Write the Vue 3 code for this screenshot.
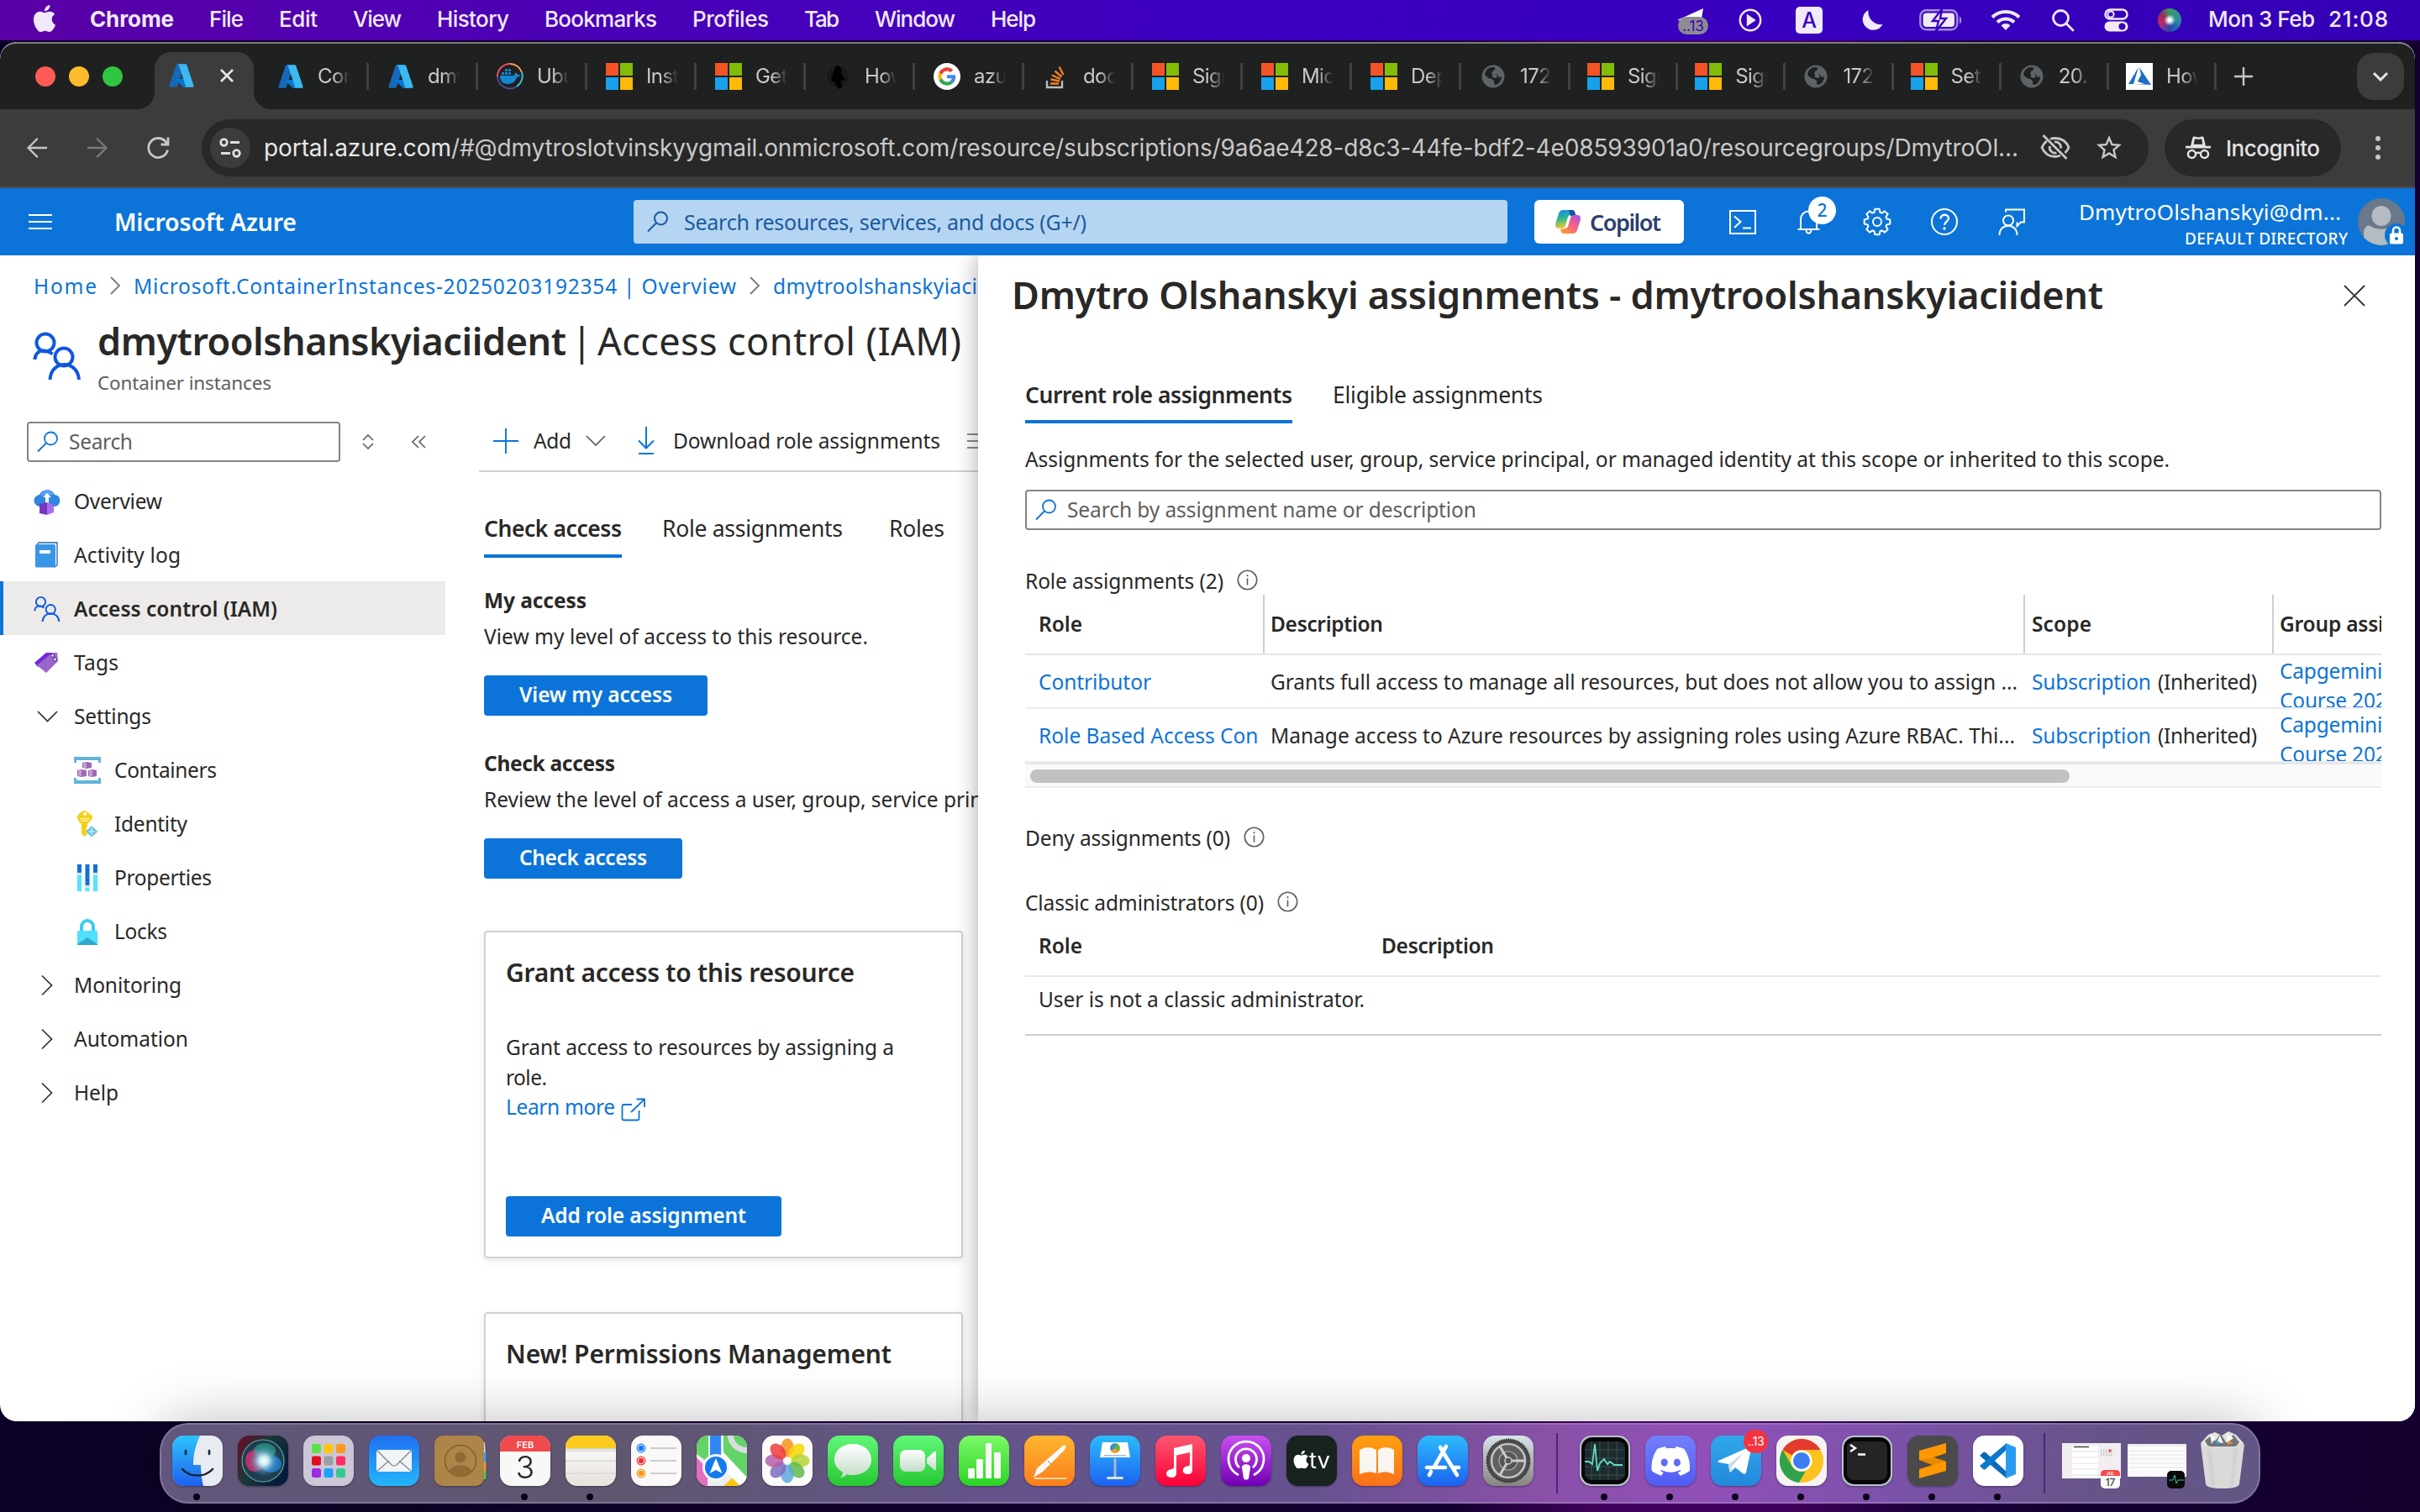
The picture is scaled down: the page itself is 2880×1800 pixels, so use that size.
<script setup>
// Spreads a label's letters so that it takes exactly the given width.
const vFit = {
  mounted(el, binding) {
    const range = document.createRange()
    range.selectNodeContents(el)
    const natural = range.getBoundingClientRect().width
    const gaps = Math.max(1, el.textContent.length - 1)
    el.style.letterSpacing = ((binding.value - natural) / gaps).toFixed(3) + 'px'
    el.style.width = binding.value + 'px'
  }
}

const menus = [['File', 41], ['Edit', 46], ['View', 58], ['History', 86], ['Bookmarks', 134], ['Profiles', 91], ['Tab', 42], ['Window', 96], ['Help', 54]]

const tabs = [
  ['azure', 'Cont'], ['azure', 'dmy'], ['docker', 'Ubu'], ['ms', 'Inst'], ['ms', 'Get'], ['dark', 'How'], ['google', 'azu'],
  ['stack', 'doc'], ['ms', 'Sign'], ['ms', 'Micr'], ['ms', 'Dep'], ['globe', '172.'], ['ms', 'Sign'], ['ms', 'Sign'],
  ['globe', '172.'], ['ms', 'Set'], ['globe', '20.'], ['docs', 'How']
].map(([icon, text], i) => ({ icon, text, narrow: i > 11 }))

const nav = [
  { icon: 'overview', text: 'Overview', w: 105 },
  { icon: 'log', text: 'Activity log', w: 127 },
  { icon: 'iam', text: 'Access control (IAM)', w: 242, active: true },
  { icon: 'tags', text: 'Tags', w: 53 },
  { icon: 'down', text: 'Settings', w: 92 },
  { icon: 'containers', text: 'Containers', w: 122, sub: true },
  { icon: 'identity', text: 'Identity', w: 87, sub: true },
  { icon: 'properties', text: 'Properties', w: 116, sub: true },
  { icon: 'locks', text: 'Locks', w: 63, sub: true },
  { icon: 'right', text: 'Monitoring', w: 128 },
  { icon: 'right', text: 'Automation', w: 136 },
  { icon: 'right', text: 'Help', w: 53 }
]

const roles = [
  { role: 'Contributor', rw: 134, desc: 'Grants full access to manage all resources, but does not allow you to assign ...', dw: 889 },
  { role: 'Role Based Access Control', rw: 0, desc: 'Manage access to Azure resources by assigning roles using Azure RBAC. Thi...', dw: 886 }
]

function gearPath(c, outer, inner, teeth) {
  const pts = []
  for (let i = 0; i < teeth; i++) {
    const a = (i * 2 * Math.PI) / teeth
    for (const [d, r] of [[-0.3, inner], [-0.17, outer], [0.17, outer], [0.3, inner]]) {
      pts.push((c + r * Math.sin(a + d)).toFixed(2) + ' ' + (c - r * Math.cos(a + d)).toFixed(2))
    }
  }
  return 'M' + pts.join('L') + 'Z'
}
const gear = gearPath(17, 15.5, 11.8, 8)

const petals = ['#f7931e', '#f6d800', '#b5d334', '#5fba46', '#5fa7dd', '#7d6cc0', '#b45fa8', '#ee3b3b']
const pads = ['#5de04a', '#ffc60a', '#f79a1d', '#e01020', '#9a9fa3', '#ff2d62', '#a02be0', '#1ea0ff', '#35c98d']
</script>

<template>
  <div class="screen">
    <svg width="0" height="0" class="defs"><defs>
      <symbol id="apple" viewBox="0 0 24 24"><path d="M12.152 6.896c-.948 0-2.415-1.078-3.96-1.04-2.04.027-3.91 1.183-4.961 3.014-2.117 3.675-.546 9.103 1.519 12.09 1.013 1.454 2.208 3.09 3.792 3.039 1.52-.065 2.09-.987 3.935-.987 1.831 0 2.35.987 3.96.948 1.637-.026 2.676-1.48 3.676-2.948 1.156-1.688 1.636-3.325 1.662-3.415-.039-.013-3.182-1.221-3.22-4.857-.026-3.04 2.48-4.494 2.597-4.559-1.429-2.09-3.623-2.324-4.39-2.376-2-.156-3.675 1.09-4.61 1.09zM15.53 3.83c.843-1.012 1.4-2.427 1.245-3.83-1.207.052-2.662.805-3.532 1.818-.78.896-1.454 2.338-1.273 3.714 1.338.104 2.715-.688 3.559-1.701" /></symbol>
      <symbol id="azure" viewBox="0 0 96 96"><path fill="#1668b8" d="M33.338 6.544h26.038l-27.03 80.087a4.152 4.152 0 0 1-3.933 2.824H8.149a4.145 4.145 0 0 1-3.928-5.47L29.404 9.368a4.152 4.152 0 0 1 3.934-2.825z" /><path fill="#0078d4" d="M71.175 60.261h-41.29a1.911 1.911 0 0 0-1.305 3.309l26.532 24.764a4.171 4.171 0 0 0 2.846 1.121h23.38z" /><path fill="#3cb8f0" d="M66.595 9.364a4.145 4.145 0 0 0-3.928-2.82H33.648a4.146 4.146 0 0 1 3.928 2.82l25.184 74.62a4.146 4.146 0 0 1-3.928 5.472h29.02a4.146 4.146 0 0 0 3.927-5.472z" /></symbol>
      <symbol id="info" viewBox="0 0 25 25"><g fill="none" stroke="#605e5c" stroke-width="1.6"><circle cx="12.5" cy="12.5" r="11.2" /><path d="M12.5 10.5v8M12.5 6v2.2" /></g></symbol>
    </defs></svg>

    <header class="menubar">
      <svg class="apple" width="32" height="32" fill="#f1e9fa"><use href="#apple" /></svg>
      <nav class="menus">
        <b v-fit="100">Chrome</b>
        <span v-for="m in menus" :key="m[0]" v-fit="m[1]">{{ m[0] }}</span>
      </nav>
      <div class="status">
        <svg width="38" height="34" viewBox="0 0 38 34"><path fill="#fff" d="M0 15 31 1 27 24 14 16z" /><rect x="1" y="11" width="36" height="21" rx="10.5" fill="#8c8c90" /><text x="19" y="28" text-anchor="middle" font-size="17" fill="#3a00b8" font-family="Inter, sans-serif">..13</text></svg>
        <svg width="28" height="28" viewBox="0 0 28 28" fill="none" stroke="#f0eafb" stroke-width="2.4"><circle cx="14" cy="14" r="12.2" /><path d="M11 8.8v10.4l7.6-5.2z" fill="#f0eafb" /></svg>
        <div class="abox">A</div>
        <svg width="28" height="28" viewBox="0 0 28 28"><path fill="#f0eafb" d="M9.5 2a12.600 12.600 0 1 0 17 17A15 15 0 0 1 9.500 2z" /></svg>
        <svg width="52" height="26" viewBox="0 0 52 26"><rect x="1.3" y="1.3" width="44" height="23" rx="7" fill="none" stroke="#a58ce0" stroke-width="2.4" /><rect x="4.6" y="4.6" width="37.4" height="16.4" rx="4" fill="#f0eafb" /><path d="M48 8.5c3 1 3 8 0 9z" fill="#a58ce0" /><path d="M27 0 16 14h7l-3 12 12-15h-7z" fill="#f0eafb" stroke="#3800be" stroke-width="2.4" /></svg>
        <svg width="36" height="26" viewBox="0 0 36 26" fill="none" stroke="#f0eafb" stroke-width="4"><path d="M2 9.5a23 23 0 0 1 32 0M8 15.5a14.5 14.5 0 0 1 20 0" /><path d="M18 25l-5.500-5.700a8 8 0 0 1 11 0z" fill="#f0eafb" stroke="none" /></svg>
        <svg width="28" height="28" viewBox="0 0 28 28" fill="none" stroke="#f0eafb" stroke-width="2.8"><circle cx="11.5" cy="11.5" r="9" /><path d="M18 18l8 8" stroke-linecap="round" /></svg>
        <svg width="30" height="28" viewBox="0 0 30 28"><rect x="1.5" y="1.5" width="26" height="11" rx="5.5" fill="none" stroke="#f0eafb" stroke-width="2.4" /><circle cx="8" cy="7" r="3.6" fill="none" stroke="#f0eafb" stroke-width="2" /><rect x="0.5" y="15.5" width="28" height="12" rx="6" fill="#f0eafb" /><circle cx="21.5" cy="21.5" r="4" fill="#3800be" /></svg>
        <div class="siri-mini"></div>
      </div>
      <div class="clock"><span v-fit="127">Mon 3 Feb</span><span v-fit="71">21:08</span></div>
    </header>

    <section class="window">
      <div class="tabstrip">
        <div class="lights"><i class="red"></i><i class="yellow"></i><i class="green"></i></div>
        <div class="tab-active">
          <svg width="32" height="32"><use href="#azure" /></svg>
          <svg class="tclose" width="20" height="20" viewBox="0 0 20 20" stroke="#e8e8e8" stroke-width="2.6"><path d="M3 3l14 14M17 3 3 17" /></svg>
        </div>
        <div v-for="(t, i) in tabs" :key="i" class="tab" :class="{ narrow: t.narrow }">
          <svg v-if="t.icon === 'azure'" width="32" height="32"><use href="#azure" /></svg>
          <svg v-else-if="t.icon === 'ms'" width="32" height="32" viewBox="0 0 32 32"><path fill="#f35325" d="M0 0h15v15H0z" /><path fill="#81bc06" d="M17 0h15v15H17z" /><path fill="#18a0ea" d="M0 17h15v15H0z" /><path fill="#ffba08" d="M17 17h15v15H17z" /></svg>
          <svg v-else-if="t.icon === 'globe'" width="32" height="32" viewBox="0 0 32 32"><circle cx="16" cy="16" r="13.5" fill="#5f6368" /><path fill="#1f2020" d="M15 5c3 0 4 1 3 3l-3 2-1 3h6l3 4 3-1c0 5-3 9-7 10l-2-1v-4l-3-2-4-1-4-4c0-4 4-9 9-9z" /><path fill="#5f6368" d="M15 13h4l2 3-2 2-4-1z" /></svg>
          <svg v-else-if="t.icon === 'google'" width="32" height="32" viewBox="0 0 72 72"><circle cx="36" cy="36" r="36" fill="#fff" /><g transform="translate(12 12)"><path fill="#EA4335" d="M24 9.5c3.54 0 6.71 1.22 9.21 3.6l6.85-6.85C35.9 2.38 30.47 0 24 0 14.62 0 6.51 5.38 2.56 13.22l7.98 6.19C12.43 13.72 17.74 9.5 24 9.5z" /><path fill="#4285F4" d="M46.98 24.55c0-1.57-.15-3.09-.38-4.55H24v9.02h12.94c-.58 2.96-2.26 5.48-4.78 7.18l7.73 6c4.51-4.18 7.09-10.36 7.09-17.65z" /><path fill="#FBBC05" d="M10.53 28.59c-.48-1.45-.76-2.99-.76-4.59s.27-3.14.76-4.59l-7.98-6.19C.92 16.46 0 20.12 0 24c0 3.88.92 7.54 2.56 10.78l7.97-6.19z" /><path fill="#34A853" d="M24 48c6.48 0 11.93-2.13 15.89-5.81l-7.73-6c-2.15 1.45-4.92 2.3-8.16 2.3-6.26 0-11.57-4.22-13.47-9.91l-7.98 6.19C6.51 42.62 14.62 48 24 48z" /></g></svg>
          <svg v-else-if="t.icon === 'docker'" width="32" height="32" viewBox="0 0 32 32" fill="none" stroke-width="2"><path d="M16 1A15 15 0 0 0 1 16" stroke="#f0506a" /><path d="M16 1a15 15 0 0 1 14 10" stroke="#f5a04a" /><path d="M30 11a15 15 0 0 1-6 17" stroke="#38c8d8" /><path d="M24 28A15 15 0 0 1 1 16" stroke="#4a4a90" /><path fill="#1687d0" d="M4 15h17c0-3 2-4 3-3l1 2h3c-1 3-3 3-4 3-2 6-6 8-11 8-6 0-9-4-9-10zM6 11h3v3H6zM10 11h3v3h-3zM14 11h3v3h-3zM10 7h3v3h-3zM14 7h3v3h-3z" /></svg>
          <svg v-else-if="t.icon === 'dark'" width="32" height="32" viewBox="0 0 32 32"><circle cx="16" cy="16" r="14" fill="#181919" stroke="#262828" /><path fill="#000" d="M14 3c5 0 7 4 6 9l5 8-5 1 1 8-4 2-5-9-4-1 2-8z" /></svg>
          <svg v-else-if="t.icon === 'stack'" width="32" height="32" viewBox="0 0 32 32" fill="none" stroke-width="2.4"><path stroke="#bcbbbb" d="M5 21v8h18v-8" /><path stroke="#f48024" d="M9 24.500h10M9.500 19.500l10.500 2M11 14.500l10 4.500M14.500 9.500l8 7M19.500 4.500l5 9.500" /></svg>
          <svg v-else width="32" height="32" viewBox="0 0 32 32"><path fill="#fff" d="M0 0h32v32H0z" /><path fill="#1f6fc0" d="M15 5 3 25h6zM16 5l2 9-4 8 8 3H10l20 1z" /></svg>
          <span class="tab-text">{{ t.text }}</span>
        </div>
        <svg class="newtab" width="22" height="22" viewBox="0 0 22 22" stroke="#c8c8c8" stroke-width="2.4"><path d="M11 0v22M0 11h22" /></svg>
        <div class="tabsearch"><svg width="20" height="12" viewBox="0 0 20 12" fill="none" stroke="#e6e6e6" stroke-width="3"><path d="M2 2l8 8 8-8" /></svg></div>
      </div>

      <div class="toolbar">
        <svg class="nav-i" width="36" height="36" viewBox="0 0 24 24" fill="#c7c7c7"><path d="M20 11.200H6.900l6.200-6.200L12 4l-8 8 8 8 1.100-1.100-6.200-6.100H20z" /></svg>
        <svg class="nav-i" width="36" height="36" viewBox="0 0 24 24" fill="#7a7a7a"><path transform="matrix(-1 0 0 1 24 0)" d="M20 11.200H6.900l6.200-6.200L12 4l-8 8 8 8 1.100-1.100-6.200-6.100H20z" /></svg>
        <svg class="nav-i" width="36" height="36" viewBox="0 0 36 36" fill="none" stroke="#c7c7c7" stroke-width="2.8"><path d="M29.500 20.500A11.500 11.500 0 1 1 27 10.500l2.500 3M30 5.500v8.500h-8.500" /></svg>
        <div class="omnibox">
          <div class="site"><svg width="26" height="24" viewBox="0 0 26 24" fill="none" stroke="#dedede" stroke-width="2.8"><circle cx="5.5" cy="5.5" r="3.8" /><path d="M13 5.500h11M2 18.500h11" /><circle cx="20.5" cy="18.5" r="3.8" /></svg></div>
          <span v-fit="223" class="host">portal.azure.com</span>
          <span v-fit="1865" class="path">/#@dmytroslotvinskyygmail.onmicrosoft.com/resource/subscriptions/9a6ae428-d8c3-44fe-bdf2-4e08593901a0/resourcegroups/DmytroOl...</span>
          <svg class="eye" width="38" height="36" viewBox="0 0 38 36" fill="none" stroke="#c7c7c7" stroke-width="2.8"><path d="M13 7.500c2-.7 4-1 6-1 8 0 13.500 5 16 11-1 2.500-2.500 4.600-4.500 6.500M25 27a17 17 0 0 1-6 1.500c-8 0-13.500-5-16-11 1.300-3 3.200-5.500 5.800-7.600M12.500 16a6.500 6.500 0 0 0 8 8M18 11a6.500 6.500 0 0 1 7.500 7.500M4.500 3l28 28" /></svg>
          <svg width="36" height="36" viewBox="0 0 24 24" fill="#c7c7c7"><path d="M22 9.240l-7.190-.62L12 2 9.190 8.630 2 9.240l5.460 4.730L5.820 21 12 17.270 18.180 21l-1.630-7.030L22 9.240zM12 15.400l-3.760 2.270 1-4.280-3.320-2.880 4.380-.38L12 6.100l1.710 4.040 4.380.38-3.320 2.880 1 4.280L12 15.400z" /></svg>
        </div>
        <div class="incog">
          <svg width="30" height="28" viewBox="0 0 30 28"><path fill="#e3e3e3" d="M8.500 1.500c.3-1 1-1.300 2-1l4.500 1 4.500-1c1-.3 1.700 0 2 1L24 12H6z" /><path fill="#282828" d="M11 3.200l4 .9 4-.9 1.300 6.500H9.700z" /><path d="M0 11.800h30v2.800H0z" fill="#e3e3e3" /><g fill="none" stroke="#e3e3e3" stroke-width="2.500"><circle cx="7.500" cy="21.500" r="4.500" /><circle cx="22.500" cy="21.500" r="4.500" /><path d="M12 20.500c2-1 4-1 6 0" /></g></svg>
          <span v-fit="112">Incognito</span>
        </div>
        <svg class="kebab" width="8" height="30" viewBox="0 0 8 30" fill="#c7c7c7"><circle cx="4" cy="4" r="3" /><circle cx="4" cy="15" r="3" /><circle cx="4" cy="26" r="3" /></svg>
      </div>

      <div class="azbar">
        <svg class="burger" width="28" height="20" viewBox="0 0 28 20" stroke="#fff" stroke-width="2"><path d="M0 2h28M0 10h28M0 18h28" /></svg>
        <span v-fit="217" class="brand">Microsoft Azure</span>
        <div class="azsearch">
          <svg width="26" height="26" viewBox="0 0 26 26" fill="none" stroke="#1b5a9c" stroke-width="2"><circle cx="16.500" cy="9" r="7.500" /><path d="M11 14.500 1 24.500" /></svg>
          <span v-fit="479">Search resources, services, and docs (G+/)</span>
        </div>
        <div class="copilot">
          <svg width="30" height="28" viewBox="0 0 30 28"><defs><linearGradient id="cpa" x1="0" y1="0" x2="0.2" y2="1"><stop offset="0" stop-color="#1a8ae8" /><stop offset=".5" stop-color="#2cb890" /><stop offset="1" stop-color="#f4c832" /></linearGradient><linearGradient id="cpb" x1="1" y1="0" x2="0.3" y2="1"><stop offset="0" stop-color="#a050e8" /><stop offset=".5" stop-color="#f06090" /><stop offset="1" stop-color="#ff9040" /></linearGradient></defs><path fill="url(#cpa)" d="M9 0h11c2.500 0 3 2 4 5l-6 1c-2 0-3 2-3.500 4L12 19c-1 2-2 3-4 3H4c-4 0-4.500-3-3.500-7L4 4c1-2.600 2.500-4 5-4z" /><path fill="#1550a8" d="M16 0h4c2.500 0 3 2 4 5l.6 2H18z" /><path fill="url(#cpb)" d="M21 28H10c-2.500 0-3-2-4-5l6-1c2 0 3-2 3.500-4L18 9c1-2 2-3 4-3h4c4 0 4.500 3 3.500 7L26 24c-1 2.600-2.500 4-5 4z" /></svg>
          <span v-fit="85">Copilot</span>
        </div>
        <div class="azicons">
          <svg width="34" height="34" viewBox="0 0 34 34" fill="none" stroke="#fff" stroke-width="2"><path d="M2 4h30v27H2zM7 10.500l7.500 6.500L7 24M17 24.500h10" /></svg>
          <div class="bell">
            <svg width="34" height="34" viewBox="0 0 34 34" fill="none" stroke="#fff" stroke-width="2"><path d="M6 26V14a9.500 9.500 0 0 1 19 0v12M2.500 26h26M12.500 27c.5 5 5.500 5 6 0" /></svg>
            <i>2</i>
          </div>
          <svg width="34" height="34" viewBox="0 0 34 34" fill="none" stroke="#fff" stroke-width="2"><path :d="gear" stroke-linejoin="round" /><circle cx="17" cy="17" r="5" /></svg>
          <svg width="34" height="34" viewBox="0 0 34 34" fill="none" stroke="#fff" stroke-width="2"><circle cx="17" cy="17" r="15" /><path d="M12.500 13.500c0-6.500 9.500-6 9.500-.5 0 3.800-5 4-5 8" stroke-width="2.4" /><circle cx="17" cy="25" r="1.700" fill="#fff" stroke="none" /></svg>
          <svg width="34" height="34" viewBox="0 0 34 34" fill="none" stroke="#fff" stroke-width="2"><circle cx="13" cy="15.500" r="6" /><path d="M2.500 33c0-15 21-15 21 0M10 5.500V2.500h22v15h-4l-4.500 4.500v-4.500" /></svg>
        </div>
        <div class="who"><span v-fit="312" class="mail">DmytroOlshanskyi@dm...</span><span v-fit="194" class="dir">DEFAULT DIRECTORY</span></div>
        <div class="avatar">
          <svg width="56" height="56" viewBox="0 0 56 56"><defs><clipPath id="av"><circle cx="28" cy="28" r="28" /></clipPath></defs><g clip-path="url(#av)"><path fill="#69788a" d="M0 0h56v56H0z" /><ellipse cx="28" cy="21" rx="11.500" ry="12" fill="#b4bbc1" /><path fill="#b4bbc1" d="M7 56V42c0-8 5-11 8-9 7 5 19 5 26 0 4-2 8 1 8 9v14z" /></g></svg>
          <svg class="lock" width="28" height="28" viewBox="0 0 28 28"><circle cx="14" cy="14" r="14" fill="#0c74d8" /><rect x="6" y="11.500" width="16" height="13" rx="2" fill="#fff" /><path d="M10 12V8.500a4 4 0 0 1 8 0V12" fill="none" stroke="#fff" stroke-width="2.600" /><circle cx="14" cy="18" r="2" fill="#0c74d8" /></svg>
        </div>
      </div>

      <div class="body">
        <div class="page">
          <div class="crumbs">
            <span v-fit="75">Home</span>
            <svg width="12" height="22" viewBox="0 0 12 22" fill="none" stroke="#797775" stroke-width="1.8"><path d="M1 1l10 10L1 21" /></svg>
            <span v-fit="717">Microsoft.ContainerInstances-20250203192354 | Overview</span>
            <svg width="12" height="22" viewBox="0 0 12 22" fill="none" stroke="#797775" stroke-width="1.8"><path d="M1 1l10 10L1 21" /></svg>
            <span v-fit="304">dmytroolshanskyiaciident</span>
          </div>
          <div class="head">
            <svg width="58" height="60" viewBox="0 0 58 60" fill="none" stroke="#0f57e0" stroke-width="4"><circle cx="15" cy="14" r="10.500" /><path d="M2.500 34c0-6 4-10.500 10-10.500 4 0 8 1.500 11 4" /><circle cx="37" cy="31" r="10.500" /><path d="M20.500 58c1-24 33-24 34.500 0" /></svg>
            <div>
              <h1><b v-fit="558">dmytroolshanskyiaciident</b><span class="bar">|</span><span v-fit="433">Access control (IAM)</span></h1>
              <div class="kind"><span v-fit="207">Container instances</span></div>
            </div>
          </div>
          <div class="cols">
            <aside>
              <div class="tools">
                <div class="box"><svg width="26" height="26" viewBox="0 0 26 26" fill="none" stroke="#0c74d8" stroke-width="1.8"><circle cx="16.500" cy="9" r="7.500" /><path d="M11 14.500 1 24.500" /></svg><span v-fit="76">Search</span></div>
                <svg class="sort" width="14" height="18" viewBox="0 0 14 18" fill="none" stroke="#605e5c" stroke-width="1.6"><path d="M1 7l6-6 6 6M1 11l6 6 6-6" /></svg>
                <svg width="17" height="16" viewBox="0 0 17 16" fill="none" stroke="#605e5c" stroke-width="1.6"><path d="M8 1 1 8l7 7M16 1 9 8l7 7" /></svg>
              </div>
              <div v-for="n in nav" :key="n.text" class="row" :class="{ active: n.active, sub: n.sub }">
                <svg v-if="n.icon === 'overview'" width="32" height="32" viewBox="0 0 32 32"><path fill="#2f86e0" d="M8 22a7 7 0 0 1-1-14C9 2 21-1 25 8c9 1 8 13 0 14z" /><path fill="#5aa2f2" d="M8 9C10 2 21 0 24 8z" /><path fill="#fff" d="M16 6l5 5h-3v7h-4v-7h-3z" /><path fill="#7a35c0" d="M7 19l9-2v15l-9-2z" /><path fill="#a56cf0" d="M16 17l8 3v9l-8 3z" /></svg>
                <svg v-else-if="n.icon === 'log'" width="32" height="32" viewBox="0 0 32 32"><path fill="#fff" stroke="#1e5fa8" stroke-width="1.3" d="M4 4l2-3h22v27l-3 2z" /><rect x="2" y="3" width="24" height="27.500" rx="1.500" fill="#3896e4" /><path fill="#fff" d="M7 10h13v4H7z" /></svg>
                <svg v-else-if="n.icon === 'iam'" width="32" height="32" viewBox="0 0 58 60" fill="none" stroke="#0f57e0" stroke-width="3.6"><circle cx="15" cy="14" r="10.500" /><path d="M1.500 34c0-6 4-10.500 10-10.500 4 0 8 1.500 11 4" /><circle cx="37" cy="31" r="10.500" /><path d="M19 58c1-24 35-24 37 0" /></svg>
                <svg v-else-if="n.icon === 'tags'" width="32" height="32" viewBox="0 0 32 32"><path fill="#7327d8" d="M1 16 15 4h9L5 21z" /><path fill="#9a66cc" d="M4 19 22 4h6l1 10-14 14z" /><circle cx="22.500" cy="7.500" r="1.800" fill="#fff" stroke="#4b128a" /><circle cx="25.500" cy="12" r="2" fill="#fff" stroke="#4b128a" /></svg>
                <svg v-else-if="n.icon === 'down'" width="32" height="32" viewBox="0 0 32 32" fill="none" stroke="#323130" stroke-width="1.7"><path d="M5 10l11.500 11.500L28 10" /></svg>
                <svg v-else-if="n.icon === 'right'" width="32" height="32" viewBox="0 0 32 32" fill="none" stroke="#323130" stroke-width="1.7"><path d="M10 4.500 21.500 16 10 27.500" /></svg>
                <svg v-else-if="n.icon === 'containers'" width="32" height="32" viewBox="0 0 32 32"><path fill="#5fb4d8" d="M0 0h32v7h-3V4H3v3H0zM0 32h32v-7h-3v3H3v-3H0z" /><g fill="#9c68b4"><path d="M10 7l5-1 6 1v6l-6 1-5-1zM4 16l5-1 6 1v7l-6 1-5-1zM17 16l5-1 5 1v7l-5 1-5-1z" /></g><g stroke="#e3cdee" stroke-width="1"><path d="M12 7v6M14 7v6M6 16v7M8 16v7M19 16v7M21 16v7" /></g></svg>
                <svg v-else-if="n.icon === 'identity'" width="32" height="32" viewBox="0 0 32 32"><path fill="#f9cf16" d="M12 0c2 0 9 5 10 7 1 3-5 8-6 9v3l-2 2 2 2-2 2 2 2-3 4-4-3V16C6 14 3 9 4 7c1-3 6-7 8-7z" /><circle cx="13" cy="4" r="2" fill="#fff" /><path stroke="#fff2a0" stroke-width="1.3" d="M7.500 9.500h11M8.500 12h9" /><path fill="#6cc4de" d="M21 18l7.500 7-7.500 6.500-7-6.500z" /><path fill="none" stroke="#e8f8ff" d="M21 20v9M17 25h8" /></svg>
                <svg v-else-if="n.icon === 'properties'" width="32" height="32" viewBox="0 0 32 32"><path fill="#50e6ff" d="M4 13h5v19H4zM13.500 28h5v4h-5zM23 13h5v19h-5z" /><path fill="#0f72d6" d="M4 0h5v10H4zM13.500 0h5v25h-5zM23 0h5v10h-5z" /><path fill="#c8c8c8" d="M3 11h7v1.200H3zM12.500 26h7v1.200h-7zM22 11h7v1.200h-7z" /></svg>
                <svg v-else width="32" height="32" viewBox="0 0 32 32"><path fill="none" stroke="#38cdf0" stroke-width="4" d="M9 16V10a7 7 0 0 1 14 0v6" /><rect x="4" y="15" width="24" height="17" rx="1.500" fill="#50e0fa" /><path fill="#2fa9cc" d="M4 31 16 23l12 8v1H4z" /></svg>
                <span v-fit="n.w">{{ n.text }}</span>
              </div>
            </aside>
            <main>
              <div class="cmd">
                <svg width="30" height="30" viewBox="0 0 30 30" stroke="#0c74d8" stroke-width="1.9"><path d="M15 0v30M0 15h30" /></svg>
                <span v-fit="45" class="c-add">Add</span>
                <svg class="c-chev" width="24" height="14" viewBox="0 0 24 14" fill="none" stroke="#605e5c" stroke-width="1.7"><path d="M1 1l11 11L23 1" /></svg>
                <svg class="c-dl" width="20" height="34" viewBox="0 0 20 34" fill="none" stroke="#0c74d8" stroke-width="2"><path d="M10 0v25M1 16.500l9 9 9-9M1 32h18" /></svg>
                <span v-fit="318" class="c-dt">Download role assignments</span>
                <svg class="c-cols" width="30" height="20" viewBox="0 0 30 20" stroke="#8a8886" stroke-width="2"><path d="M0 2h30M0 10h30M0 18h30" /></svg>
              </div>
              <div class="mtabs">
                <b v-fit="164">Check access</b><span v-fit="215">Role assignments</span><span v-fit="66">Roles</span>
              </div>
              <div class="blk">
                <strong v-fit="122">My access</strong>
                <span v-fit="457">View my level of access to this resource.</span>
                <button class="b1"><span v-fit="182">View my access</span></button>
              </div>
              <div class="blk second">
                <strong v-fit="156">Check access</strong>
                <span v-fit="653">Review the level of access a user, group, service principal,</span>
                <button class="b2"><span v-fit="152">Check access</span></button>
              </div>
              <div class="card">
                <h3><span v-fit="415">Grant access to this resource</span></h3>
                <p><span v-fit="462">Grant access to resources by assigning a</span></p>
                <p><span v-fit="49">role.</span></p>
                <p class="more"><span v-fit="130">Learn more</span><svg width="30" height="28" viewBox="0 0 30 28" fill="none" stroke="#0c74d8" stroke-width="1.8"><path d="M13 8H3.500Q1.500 8 1.500 10v14.500q0 2 2 2h16q2 0 2-2V15M12 17 28 1.500M18.500 1.500H28V11" /></svg></p>
                <button class="b3"><span v-fit="244">Add role assignment</span></button>
              </div>
              <div class="card last"><h3><span v-fit="459">New! Permissions Management</span></h3></div>
            </main>
          </div>
        </div>

        <div class="panel">
          <div class="ptitle">
            <h2><span v-fit="1299">Dmytro Olshanskyi assignments - dmytroolshanskyiaciident</span></h2>
            <svg width="26" height="26" viewBox="0 0 26 26" stroke="#323130" stroke-width="1.9"><path d="M1 1l24 24M25 1 1 25" /></svg>
          </div>
          <div class="ptabs"><b v-fit="318">Current role assignments</b><span v-fit="250">Eligible assignments</span></div>
          <div class="pdesc"><span v-fit="1362">Assignments for the selected user, group, service principal, or managed identity at this scope or inherited to this scope.</span></div>
          <div class="box psearch"><svg width="26" height="26" viewBox="0 0 26 26" fill="none" stroke="#0c74d8" stroke-width="1.8"><circle cx="16.500" cy="9" r="7.500" /><path d="M11 14.500 1 24.500" /></svg><span v-fit="487">Search by assignment name or description</span></div>
          <div class="label l1"><span v-fit="236">Role assignments (2)</span><svg width="25" height="25"><use href="#info" /></svg></div>
          <div class="grid">
            <div class="gr gh">
              <div><b v-fit="52">Role</b></div><div><b v-fit="134">Description</b></div><div><b v-fit="71">Scope</b></div><div><b class="tight">Group assignment</b></div>
            </div>
            <div v-for="r in roles" :key="r.role" class="gr">
              <div class="lnk"><span v-if="r.rw" v-fit="r.rw">{{ r.role }}</span><p v-else class="clip">{{ r.role }}</p></div>
              <div><span v-fit="r.dw">{{ r.desc }}</span></div>
              <div><span v-fit="142" class="lnk">Subscription</span><span v-fit="118" class="inh">(Inherited)</span></div>
              <div class="lnk wrap"><span>Capgemini</span><span>Course 2025</span></div>
            </div>
            <div class="track"><div class="thumb"></div></div>
          </div>
          <div class="label l2"><span v-fit="244">Deny assignments (0)</span><svg width="25" height="25"><use href="#info" /></svg></div>
          <div class="label l3"><span v-fit="284">Classic administrators (0)</span><svg width="25" height="25"><use href="#info" /></svg></div>
          <div class="classic ch"><b v-fit="52">Role</b><b v-fit="134" class="cd">Description</b></div>
          <div class="classic cr"><span v-fit="388">User is not a classic administrator.</span></div>
        </div>
      </div>
    </section>

    <footer class="dock">
      <svg width="0" height="0" class="defs"><defs>
        <linearGradient id="gBlue" x1="0" y1="0" x2="0" y2="1"><stop offset="0" stop-color="#2070f2" /><stop offset="1" stop-color="#24b6fa" /></linearGradient>
        <linearGradient id="gBlue2" x1="0" y1="0" x2="0" y2="1"><stop offset="0" stop-color="#2cbcfc" /><stop offset="1" stop-color="#1c62f0" /></linearGradient>
        <linearGradient id="gGreen" x1="0" y1="0" x2="0" y2="1"><stop offset="0" stop-color="#60f878" /><stop offset="1" stop-color="#26c832" /></linearGradient>
        <linearGradient id="gLime" x1="0" y1="0" x2="0" y2="1"><stop offset="0" stop-color="#7cf868" /><stop offset="1" stop-color="#2cd424" /></linearGradient>
        <linearGradient id="gOrange" x1="0" y1="0" x2="0" y2="1"><stop offset="0" stop-color="#ffb62e" /><stop offset="1" stop-color="#fb7e1c" /></linearGradient>
        <linearGradient id="gBook" x1="0" y1="0" x2="0" y2="1"><stop offset="0" stop-color="#ffa00e" /><stop offset="1" stop-color="#f9701a" /></linearGradient>
        <linearGradient id="gRed" x1="0" y1="0" x2="0" y2="1"><stop offset="0" stop-color="#fb5870" /><stop offset="1" stop-color="#fa0038" /></linearGradient>
        <linearGradient id="gPurple" x1="0" y1="0" x2="0" y2="1"><stop offset="0" stop-color="#c850f0" /><stop offset="1" stop-color="#7000b4" /></linearGradient>
        <linearGradient id="gGrey" x1="0" y1="0" x2="0" y2="1"><stop offset="0" stop-color="#d8e4ea" /><stop offset="1" stop-color="#86847e" /></linearGradient>
        <linearGradient id="gWhite" x1="0" y1="0" x2="0" y2="1"><stop offset="0" stop-color="#ffffff" /><stop offset="1" stop-color="#c4dcc8" /></linearGradient>
        <linearGradient id="gTg" x1="0" y1="0" x2="0" y2="1"><stop offset="0" stop-color="#30a8ea" /><stop offset="1" stop-color="#2488dc" /></linearGradient>
        <linearGradient id="gDc" x1="0" y1="0" x2="0" y2="1"><stop offset="0" stop-color="#7480fa" /><stop offset="1" stop-color="#505cf4" /></linearGradient>
        <linearGradient id="gNote" x1="0" y1="0" x2="0" y2="1"><stop offset="0" stop-color="#fff" /><stop offset="1" stop-color="#e6e2dc" /></linearGradient>
        <radialGradient id="gSiri"><stop offset="0" stop-color="#ffffff" /><stop offset=".3" stop-color="#c0e8f0" /><stop offset=".65" stop-color="#70a8d0" stop-opacity=".5" /><stop offset="1" stop-color="#3080b0" stop-opacity="0" /></radialGradient>
        <linearGradient id="gSiriB" x1="0" y1="0" x2="1" y2="0.6"><stop offset="0" stop-color="#700828" /><stop offset=".5" stop-color="#183838" /><stop offset="1" stop-color="#081c3c" /></linearGradient>
        <linearGradient id="gFind" x1="0" y1="0" x2="0" y2="1"><stop offset="0" stop-color="#2cc4fc" /><stop offset="1" stop-color="#2060ee" /></linearGradient>
        <clipPath id="sq"><rect width="60" height="60" rx="14" /></clipPath>
      </defs></svg>

      <div class="app on"><svg viewBox="0 0 60 60"><g clip-path="url(#sq)"><path fill="#e8ebf2" d="M0 0h60v60H0z" /><path fill="url(#gFind)" d="M0 0h33c-5 11-8 22-8 35h9c0 9 1 17 3 25H0z" /><path stroke="#14283c" stroke-width="2.600" stroke-linecap="round" fill="none" d="M16 18v4M44 18v4M12 40c9 10 27 10 36 0" /></g></svg></div>
      <div class="app"><svg viewBox="0 0 60 60"><rect width="60" height="60" rx="14" fill="url(#gSiriB)" /><circle cx="30" cy="30" r="25" fill="#203c50" stroke="#5fa898" stroke-width="1.200" /><ellipse cx="20" cy="30" rx="11" ry="13" fill="#e02c6c" opacity=".8" /><ellipse cx="40" cy="34" rx="12" ry="10" fill="#1c84d8" opacity=".8" /><ellipse cx="32" cy="18" rx="13" ry="9" fill="#28b488" opacity=".6" /><circle cx="31" cy="30" r="19" fill="url(#gSiri)" /></svg></div>
      <div class="app"><svg viewBox="0 0 60 60"><rect width="60" height="60" rx="14" fill="#cbc7d6" /><rect v-for="(c, i) in pads" :key="i" :x="10 + (i % 3) * 14.5" :y="10 + Math.floor(i / 3) * 14.5" width="11" height="11" rx="2.500" :fill="c" /></svg></div>
      <div class="app"><svg viewBox="0 0 60 60"><rect width="60" height="60" rx="14" fill="url(#gBlue)" /><rect x="9" y="17" width="42" height="26" rx="3" fill="#f2f4f6" /><path fill="none" stroke="#8a9098" stroke-width="1.500" d="M10 18l17 17q3 2 6 0l17-17M10 42l14-12M50 42 36 30" /></svg></div>
      <div class="app"><svg viewBox="0 0 60 60"><path fill="#d8d8d8" d="M55 8h5q2 22 0 44h-5z" /><path fill="#35a8f0" d="M55 20h6.500v12H55z" /><path fill="#f79a1d" d="M55 32h6.500v10H55z" /><path fill="#50c84c" d="M55 42h6.500v10H55z" /><rect width="59" height="60" rx="10" fill="#ae8548" /><circle cx="31" cy="30" r="18.500" fill="none" stroke="#80602e" stroke-width="1.500" /><circle cx="31" cy="26" r="6.500" fill="#8f6b36" /><path fill="#8f6b36" d="M18 42c3-9 23-9 26 0-7 8-19 8-26 0z" /></svg></div>
      <div class="app on"><svg viewBox="0 0 60 60"><g clip-path="url(#sq)"><path fill="#f8f8f8" d="M0 0h60v60H0z" /><path fill="#f24a4c" d="M0 0h60v19H0z" /></g><text x="30" y="14.500" text-anchor="middle" font-size="11" font-weight="600" fill="#fff">FEB</text><text x="30" y="51" text-anchor="middle" font-size="37" font-weight="300" fill="#222">3</text></svg></div>
      <div class="app on"><svg viewBox="0 0 60 60"><g clip-path="url(#sq)"><path fill="url(#gNote)" d="M0 0h60v60H0z" /><path fill="#fccb20" d="M0 0h60v15H0z" /><path fill="none" stroke="#b8b4ac" d="M0 16h60" /><path stroke="#999" stroke-dasharray="1 1.500" d="M0 18.500h60" /><path stroke="#d4d0ca" d="M0 30h60M0 45h60" /></g></svg></div>
      <div class="app"><svg viewBox="0 0 60 60"><rect width="60" height="60" rx="14" fill="#faf9f8" /><g stroke="#c0bebc" stroke-width="1.600"><path d="M23 15h31M23 30h31M23 45h31" /></g><g fill="none" stroke-width="1.200"><circle cx="12" cy="15" r="4.800" stroke="#0a7cff" /><circle cx="12" cy="30" r="4.800" stroke="#f33036" /><circle cx="12" cy="45" r="4.800" stroke="#fa920a" /></g><circle cx="12" cy="15" r="3.200" fill="#0a7cff" /><circle cx="12" cy="30" r="3.200" fill="#f33036" /><circle cx="12" cy="45" r="3.200" fill="#fa920a" /></svg></div>
      <div class="app"><svg viewBox="0 0 60 60"><g clip-path="url(#sq)"><path fill="#eceef0" d="M0 0h60v60H0z" /><path fill="#62d468" d="M0 0h14v32L0 22zM32 0h28v50L32 20z" /><path fill="#e66cc0" d="M0 26l13 14v20H0z" /><path fill="#fcc80c" d="M32 60l14-13 14 13z" /><path fill="#fff" d="M30 18l30 32v10H52L30 38z" /><path fill="none" stroke="#d8dcdc" stroke-width="7" d="M40-4c0 14 8 22 24 22" /><path fill="#3088f4" d="M16 0h13v36H16z" /></g><circle cx="23" cy="38" r="14.500" fill="#1478f0" stroke="#f6f6f6" stroke-width="3" /><path fill="#fff" d="M23 27l7.500 18-7.500-4-7.500 4z" /></svg></div>
      <div class="app"><svg viewBox="0 0 60 60"><rect width="60" height="60" rx="14" fill="#fbfbfa" /><g transform="translate(30 30)"><ellipse v-for="(c, i) in petals" :key="c" cx="0" cy="-15.500" rx="7.800" ry="11" :fill="c" opacity=".85" :transform="`rotate(${i * 45})`" /></g></svg></div>
      <div class="app"><svg viewBox="0 0 60 60"><rect width="60" height="60" rx="14" fill="url(#gGreen)" /><path fill="url(#gWhite)" d="M30 10c13 0 22 8 22 18.500S43 47 30 47c-2 0-5 0-7-1-2 2-5 4-8 4 2-2 3-4 3-6.500C11 40 8 34 8 28.500 8 18 17 10 30 10z" /></svg></div>
      <div class="app"><svg viewBox="0 0 60 60"><rect width="60" height="60" rx="14" fill="url(#gGreen)" /><rect x="8" y="17" width="30" height="26" rx="7" fill="url(#gWhite)" /><path fill="url(#gWhite)" d="M40 27l9-8q2-1 2 1v20q0 2-2 1l-9-8z" /></svg></div>
      <div class="app"><svg viewBox="0 0 60 60"><rect width="60" height="60" rx="14" fill="url(#gLime)" /><g fill="#f4fbf2"><rect x="11" y="39" width="8" height="12" rx="1" /><rect x="21" y="28" width="8" height="23" rx="1" /><rect x="32" y="9" width="7" height="42" rx="1" /><rect x="42" y="20" width="8" height="31" rx="1" /></g></svg></div>
      <div class="app"><svg viewBox="0 0 60 60"><rect width="60" height="60" rx="14" fill="url(#gOrange)" /><path fill="#f8f8f8" d="M46 12c4-2 4 1 2 5L22 43 11 50l4-11z" /><path stroke="#888" d="M28 30l4 4" /><path stroke="#ffd9a0" stroke-width="2" d="M12 51h38" /></svg></div>
      <div class="app"><svg viewBox="0 0 60 60"><rect width="60" height="60" rx="14" fill="url(#gBlue2)" /><path fill="#fff" d="M15 8h30l3 18H12z" /><path fill="#a8b8c8" d="M17 23h26v1.500H17zM28.500 27h3v22h-3z" /><rect x="20" y="49" width="20" height="3" rx="1.500" fill="#dce4ec" /><circle cx="30" cy="15" r="6" fill="#f59a23" /><path fill="#58b848" d="M30 15V9a6 6 0 0 1 4 10z" /><path fill="#3090e8" d="M30 15V9a6 6 0 0 0-5 9z" /></svg></div>
      <div class="app"><svg viewBox="0 0 60 60"><rect width="60" height="60" rx="14" fill="url(#gRed)" /><path fill="#fff" d="M22 15l22-5v31c0 4-3 5-6 5-7 0-7-9 0-9.500 2 0 3-1 3-3V20l-16 3.500V45c0 4-3 5-6 5-8 0-8-9 0-10 2 0 3-1 3-3z" /></svg></div>
      <div class="app"><svg viewBox="0 0 60 60"><rect width="60" height="60" rx="14" fill="url(#gPurple)" /><g fill="none" stroke="#fff" stroke-width="2.800"><path d="M21 47a21 21 0 1 1 18 0" /><path d="M22 38a12.500 12.500 0 1 1 16 0" /></g><circle cx="30" cy="27" r="5" fill="#fff" /><path fill="#fff" d="M25 38c0-5 10-5 10 0l-2 13c-1 2-5 2-6 0z" /></svg></div>
      <div class="app"><svg viewBox="0 0 60 60"><rect width="60" height="60" rx="14" fill="#18221f" /><svg x="6.500" y="17.500" width="22" height="22" fill="#fff"><use href="#apple" /></svg><text x="27" y="39" font-size="26" fill="#fff" textLength="25" lengthAdjust="spacingAndGlyphs">tv</text></svg></div>
      <div class="app"><svg viewBox="0 0 60 60"><rect width="60" height="60" rx="14" fill="url(#gBook)" /><path fill="#f9f6f2" d="M9 17q10-6 20 0v28q-9-4-20 1zM31 17q9-6 19 0v29q-10-5-19-1z" /></svg></div>
      <div class="app"><svg viewBox="0 0 60 60"><rect width="60" height="60" rx="14" fill="url(#gBlue2)" /><g stroke="#fff" stroke-width="4.600" stroke-linecap="round"><path d="M27 14l20 33M34 13 20 37M11 38h22M42 38h7M16 43l-2 4" /></g></svg></div>
      <div class="app"><svg viewBox="0 0 60 60"><rect width="60" height="60" rx="14" fill="url(#gGrey)" /><circle cx="30" cy="30" r="25.500" fill="#4c4c4c" stroke="#2c2c2c" stroke-width="2" stroke-dasharray="1.500 1.200" /><circle cx="30" cy="30" r="20" fill="#606060" stroke="#c2c2c2" stroke-width="2.600" /><circle cx="30" cy="30" r="11" fill="#555" stroke="#a8a8a8" stroke-width="1.200" /><path stroke="#cacaca" stroke-width="3" d="M30 30h20M30 30 20 13M30 30 20 47" /><circle cx="30" cy="30" r="4" fill="#555" stroke="#ccc" stroke-width="1.500" /></svg></div>

      <i class="sep s1"></i>

      <div class="app on"><svg viewBox="0 0 60 60"><rect width="60" height="60" rx="14" fill="#b8c4cc" /><rect x="2" y="2" width="56" height="56" rx="13" fill="#050505" /><rect x="6" y="7" width="48" height="46" rx="8" fill="#1c2a2c" /><path stroke="#365050" d="M14 7v46M24 7v46M34 7v46M44 7v46M6 17h48M6 27h48M6 37h48M6 47h48" /><path fill="none" stroke="#66dcc4" stroke-width="1.800" d="M6 31h5l4 3 3-24 3 32 3-9 5-5 4 6 3-3 5 4h10" /></svg></div>
      <div class="app on"><svg viewBox="0 0 60 60"><rect width="60" height="60" rx="14" fill="url(#gDc)" /><g transform="translate(7.500 7.500) scale(1.900)"><path fill="#fff" d="M20.317 4.370a19.791 19.791 0 00-4.885-1.515.074.074 0 00-.079.037c-.211.375-.445.865-.608 1.250-1.845-.276-3.680-.276-5.487 0-.164-.393-.406-.874-.618-1.250a.077.077 0 00-.079-.037 19.736 19.736 0 00-4.885 1.515.070.070 0 00-.032.028C.533 9.046-.319 13.580.099 18.058a.082.082 0 00.031.056c2.053 1.508 4.041 2.423 5.993 3.029a.078.078 0 00.084-.028c.462-.630.873-1.295 1.226-1.994a.076.076 0 00-.042-.106c-.653-.248-1.274-.550-1.872-.892a.077.077 0 01-.008-.128c.126-.094.252-.192.372-.291a.074.074 0 01.078-.011c3.928 1.793 8.180 1.793 12.061 0a.074.074 0 01.079.010c.120.099.246.198.373.292a.077.077 0 01-.007.128 12.299 12.299 0 01-1.873.891.077.077 0 00-.041.107c.360.698.772 1.363 1.225 1.993a.076.076 0 00.084.029c1.961-.607 3.950-1.522 6.002-3.029a.077.077 0 00.031-.055c.500-5.177-.838-9.674-3.549-13.660a.061.061 0 00-.031-.029zM8.020 15.331c-1.183 0-2.157-1.086-2.157-2.419 0-1.333.956-2.419 2.157-2.419 1.211 0 2.176 1.095 2.157 2.419 0 1.333-.956 2.419-2.157 2.419zm7.975 0c-1.183 0-2.157-1.086-2.157-2.419 0-1.333.955-2.419 2.157-2.419 1.211 0 2.176 1.095 2.157 2.419 0 1.333-.946 2.419-2.157 2.419z" /></g></svg></div>
      <div class="app on"><svg viewBox="0 0 60 60"><rect width="60" height="60" rx="14" fill="url(#gTg)" /><path fill="#fff" d="M9 30 45 14q3-1 3 2l-6 28q-1 3-4 1l-9-7-5 5q-2 2-2-2l-1-7-11-2q-3-1-1-2z" /><path fill="#c8dcec" d="M21 34 40 20 25 37l-1 6q-2 0-2-2z" /></svg><em>..13</em></div>
      <div class="app on"><svg viewBox="0 0 60 60"><rect width="60" height="60" rx="14" fill="#f6f4f2" /><circle cx="30" cy="30" r="26" fill="#fcc31e" /><path fill="#e33b2e" d="M30 4a26 26 0 0 1 22.500 13H30a13 13 0 0 0-11.300 6.500L7.500 17A26 26 0 0 1 30 4z" /><path fill="#30a24c" d="M7.500 17l11.200 19.500A13 13 0 0 0 35 42l-8 14A26 26 0 0 1 7.500 17z" /><circle cx="30" cy="30" r="12.600" fill="#fff" /><circle cx="30" cy="30" r="10" fill="#3f7ef0" /></svg></div>
      <div class="app on"><svg viewBox="0 0 60 60"><rect width="60" height="60" rx="14" fill="#b8c4cc" /><rect x="2" y="2" width="56" height="56" rx="13" fill="#050505" /><rect x="6" y="7" width="48" height="46" rx="8" fill="#242424" /><path fill="none" stroke="#fff" stroke-width="2.400" d="M10 11l6 4-6 4M19 22.500h9" /></svg></div>
      <div class="app on"><svg viewBox="0 0 60 60"><rect width="60" height="60" rx="14" fill="#4a4a4a" /><path fill="#ff9800" d="M46 9v12L31 26l15 5v11L14 51V40l16-5-16-6V18z" /><path fill="#d87c00" d="M14 29l16 6 16-5-15-4z" opacity=".6" /></svg></div>
      <div class="app on"><svg viewBox="0 0 60 60"><rect width="60" height="60" rx="14" fill="#fff" /><path fill="#0a6cb8" d="M8 24l4-4q1-1 3 0l27 25-2 6z" /><path fill="#0c7acc" d="M8 36l4 4q1 1 3 0l27-25-2-6z" /><path fill="#2a9cf0" d="M39 9l12 5v32l-12 5z" /></svg></div>

      <i class="sep s2"></i>

      <div class="thumbs">
        <svg width="70" height="54" viewBox="0 0 70 54"><path fill="#f1edf1" d="M0 0h70v42H0z" /><path fill="#fff" d="M12 3h31v39H12z" /><path stroke="#444" stroke-width="1.500" d="M14 4.500h18" /><path stroke="#e3e0e3" d="M12 10h31M12 17h31M12 24h31M12 31h31M12 38h31" /><path stroke="#999" stroke-dasharray="1.500 1.500" d="M46 8h14M46 11h14M46 14h14" /><circle cx="57" cy="9" r="1.500" fill="#e33" /><rect x="46" y="32" width="23" height="22" rx="5" fill="#f8f8f8" /><path fill="#f24a4c" d="M46 39v-2q0-5 5-5h13q5 0 5 5v2z" /><text x="57.500" y="38" text-anchor="middle" font-size="5" font-weight="600" fill="#fff">JUL</text><text x="57.500" y="51" text-anchor="middle" font-size="12" fill="#222">17</text></svg>
        <svg width="70" height="54" viewBox="0 0 70 54"><path fill="#fbfbfb" d="M0 1h70v39H0z" /><path fill="#eee" d="M0 1h70v3H0z" /><path stroke="#e6e6ea" d="M0 9h70M0 14h70M0 19h70M0 24h70M0 29h70" /><rect x="47" y="33" width="21" height="21" rx="5" fill="#0a0a0a" /><path fill="none" stroke="#40b8a0" d="M49 44h5l2-6 2 10 2-4h7" /></svg>
      </div>
      <svg class="trash" width="54" height="70" viewBox="0 0 54 70"><path fill="#e4e2de" d="M1 15 10 5l8-3 8 4 8-5 9 4 9 10-4 7H6z" /><path fill="#6e7478" d="M6 12l8-6 4 7 7-9 6 10 9-9 7 9-4 5H10z" /><path fill="#f5f5f5" d="M12 4l7 4-5 8zM32 3l8 6-8 6zM24 6l4 9-8-1z" /><path fill="#3aa0d0" d="M18 11l6 3-4 3z" /><path fill="#e88a30" d="M34 12l6 3-7 2z" /><path fill="#dbdad8" d="M1 16q26 8 52 0l-6 48q-2 5-20 5t-20-5z" /><path fill="#cbc9c8" d="M9 22l4 44h5l-4-44zM40 22l-4 44h4l5-44z" opacity=".5" /></svg>
    </footer>
  </div>
</template>

<style>
html,
body {
  margin: 0;
  background: #12002c;
}
</style>

<style scoped>
.screen {
  width: 2880px;
  height: 1800px;
  overflow: hidden;
  display: flex;
  flex-direction: column;
  font-family: Inter, "Liberation Sans", sans-serif;
  background:
    linear-gradient(90deg, #0c0024 0%, #140032 40%, #170038 60%, #4a0068 66%, #4a0068 74%, #1a0040 80%, #14002e 100%);
}
span, b, strong, h1, h2, h3 {
  white-space: pre;
  flex: none;
}
span, b, strong {
  display: inline-block;
}
svg {
  flex: none;
  display: block;
}
.defs { position: absolute; }

/* menu bar */
.menubar {
  height: 48px;
  flex: none;
  display: flex;
  align-items: center;
  color: #f1e9fa;
  font-size: 26px;
  background: linear-gradient(90deg, #5a00a6 0%, #4a00b6 25%, #3d00c0 50%, #3800be 75%, #3400b4 100%);
}
.apple { margin: -4px 0 0 37px; }
.menus {
  display: flex;
  gap: 42px;
  margin: -3px 0 0 38px;
}
.menus span, .clock span { font-weight: 500; }
.status {
  margin-left: auto;
  display: flex;
  align-items: center;
  gap: 38px;
}
.status > :nth-child(1) { margin: 4px -3px 0 0; }
.status > :nth-child(3) { margin-left: 2px; }
.status > :nth-child(4) { margin-left: 7px; }
.status > :nth-child(5) { margin-left: 4px; }
.status > :nth-child(6) { margin-left: -5px; }
.status > :nth-child(7) { margin-left: -2px; }
.status > :nth-child(8) { margin-left: -3px; }
.status > :nth-child(9) { margin-left: -4px; }
.abox {
  width: 32px;
  height: 32px;
  border-radius: 5px;
  background: #f0eafb;
  color: #3a00be;
  font: 500 25px/32px Inter, sans-serif;
  text-align: center;
}
.siri-mini {
  width: 28px;
  height: 28px;
  border-radius: 50%;
  background: radial-gradient(circle at 50% 50%, #fff 0 8%, transparent 34%), conic-gradient(#3c9a68, #2a8ca0 25%, #2448b0 50%, #c02868 70%, #903058 85%, #3c9a68);
}
.clock {
  display: flex;
  gap: 16px;
  margin: -3px 38px 0 32px;
}

/* browser */
.window {
  margin-top: 2px;
  width: 2874px;
  height: 1642px;
  flex: none;
  border-radius: 20px;
  overflow: hidden;
  background: #fff;
  display: flex;
  flex-direction: column;
}
.tabstrip {
  height: 80px;
  box-sizing: border-box;
  flex: none;
  background: #1f2020;
  border-top: 2px solid #7c7d7d;
  border-radius: 20px 20px 0 0;
  display: flex;
  align-items: center;
  position: relative;
}
.lights {
  display: flex;
  gap: 16px;
  margin-left: 42px;
  width: 142px;
}
.lights i { width: 24px; height: 24px; border-radius: 50%; }
.red { background: #ff5b56; }
.yellow { background: #fdbc2e; }
.green { background: #2fc740; }
.tab-active {
  width: 118px;
  height: 68px;
  align-self: flex-end;
  border-radius: 20px 20px 0 0;
  background: #3c3c3c;
  display: flex;
  align-items: center;
  position: relative;
}
.tab-active::before, .tab-active::after {
  content: "";
  position: absolute;
  bottom: 0;
  width: 20px;
  height: 20px;
}
.tab-active::before { left: -20px; background: radial-gradient(circle at 0 0, transparent 19.5px, #3c3c3c 20px); }
.tab-active::after { right: -20px; background: radial-gradient(circle at 100% 0, transparent 19.5px, #3c3c3c 20px); }
.tab-active > svg:first-child { margin: -12px 0 0 16px; }
.tclose { margin: -12px 0 0 28px; }
.tab {
  width: 130px;
  height: 32px;
  flex: none;
  display: flex;
  align-items: center;
  box-sizing: border-box;
  padding-left: 22px;
  border-right: 3px solid #3f4142;
}
.tab-active + .tab { width: 137px; padding-left: 28px; }
.tab.narrow { width: 128.2px; padding-left: 20px; }
.tab-text {
  margin-left: 16px;
  width: 38px;
  overflow: hidden;
  font-size: 24px;
  letter-spacing: -0.6px;
  line-height: 32px;
  color: #c9cacb;
  -webkit-mask-image: linear-gradient(90deg, #000 50%, transparent);
  mask-image: linear-gradient(90deg, #000 50%, transparent);
}
.newtab { margin-left: 21px; }
.tabsearch {
  margin: 0 13px 0 auto;
  width: 56px;
  height: 56px;
  border-radius: 20px;
  background: #3c3c3c;
  display: grid;
  place-items: center;
}
.toolbar {
  height: 94px;
  box-sizing: border-box;
  flex: none;
  background: #3c3c3c;
  border-bottom: 2px solid #4b4b4b;
  display: flex;
  align-items: center;
}
.nav-i { margin-right: 36px; }
.nav-i:first-child { margin-left: 26px; }
.nav-i:nth-child(3) { margin-right: 34px; }
.omnibox {
  width: 2317px;
  height: 68px;
  border-radius: 34px;
  background: #282828;
  display: flex;
  align-items: center;
  font-size: 28px;
  color: #c9c9c9;
}
.site {
  width: 48px;
  height: 48px;
  margin: 0 16px 0 10px;
  border-radius: 50%;
  background: #3c3c3c;
  display: grid;
  place-items: center;
}
.host { color: #e8e8e8; }
.eye { margin: 0 27px 0 25px; }
.incog {
  margin-left: 19px;
  width: 210px;
  height: 68px;
  border-radius: 34px;
  background: #282828;
  color: #e3e3e3;
  display: flex;
  align-items: center;
  font-size: 26px;
  font-weight: 500;
}
.incog svg { margin: 0 18px 0 25px; }
.kebab { margin-left: 40px; }

/* azure header */
.azbar {
  height: 80px;
  flex: none;
  background: #0c74d8;
  color: #fff;
  display: flex;
  align-items: center;
  font-family: "Noto Sans", "Open Sans", sans-serif;
}
.burger { margin-left: 34px; }
.brand {
  margin-left: 74px;
  font-size: 28.5px;
  font-weight: 600;
}
.azsearch {
  margin-left: 401px;
  width: 1040px;
  height: 52px;
  border-radius: 4px;
  background: #b5d5f2;
  color: #1b5a9c;
  display: flex;
  align-items: center;
  font-size: 25px;
}
.azsearch svg { margin: 0 18px 0 16px; }
.copilot {
  margin-left: 32px;
  width: 178px;
  height: 52px;
  border-radius: 6px;
  background: #fff;
  color: #2b4070;
  display: flex;
  align-items: center;
  font-size: 27px;
  font-weight: 600;
}
.copilot svg { margin: 0 11px 0 25px; }
.azicons {
  margin-left: 53px;
  display: flex;
  gap: 46px;
}
.bell { width: 34px; position: relative; }
.bell i {
  position: absolute;
  left: 15px;
  top: -13px;
  width: 33px;
  height: 33px;
  border-radius: 50%;
  background: #fff;
  color: #0c74d8;
  font: 500 21px/33px "Noto Sans", sans-serif;
  text-align: center;
}
.who {
  margin-left: auto;
  width: 320px;
  height: 80px;
  display: flex;
  flex-direction: column;
}
.mail { font-size: 26px; line-height: 36px; margin-top: 10px; }
.dir { font-size: 19px; line-height: 26px; font-weight: 500; align-self: flex-end; margin-top: 1px; }
.avatar {
  margin: 0 12px 0 12px;
  position: relative;
}
.lock { position: absolute; right: -4px; bottom: -2px; }

/* portal body */
.body {
  flex: 1;
  min-height: 0;
  display: flex;
  color: #292827;
  font-family: "Noto Sans", "Open Sans", sans-serif;
  font-size: 24.5px;
}
.page {
  width: 1164px;
  flex: none;
  overflow: hidden;
}
.crumbs {
  height: 70px;
  display: flex;
  align-items: center;
  gap: 16px;
  padding-left: 40px;
  color: #0c74d8;
}
.crumbs span { margin-top: 2px; }
.crumbs svg { margin-top: 2px; }
.head {
  height: 113px;
  display: flex;
  padding-left: 39px;
}
.head > svg { margin-top: 20px; }
.head > div { margin-left: 19px; }
h1 {
  margin: 0;
  height: 62px;
  line-height: 63px;
  font-size: 45px;
  font-weight: 400;
  display: flex;
}
h1 b { font-weight: 600; }
.bar { width: 37px; text-align: center; }
.kind {
  font-size: 22.5px;
  line-height: 34px;
  color: #605e5c;
  margin-top: 3px;
}
.cols { display: flex; }
aside { width: 530px; flex: none; }
.tools {
  height: 77px;
  padding-left: 32px;
  display: flex;
  align-items: flex-start;
}
.tools > * { margin-top: 15px; }
.box {
  height: 48px;
  width: 373px;
  box-sizing: border-box;
  border: 2px solid #868482;
  border-radius: 4px;
  display: flex;
  align-items: center;
  color: #605e5c;
}
.box svg { margin: 0 12px 0 10px; }
.box span { margin-top: -2px; }
.tools .sort { margin: 30px 45px 0 26px; }
.tools > svg:last-child { margin-top: 31px; }
.row {
  height: 64px;
  padding-left: 40px;
  display: flex;
  align-items: center;
}
.row svg { margin: 2px 16px 0 0; }
.row span { margin-top: 1px; }
.row.sub { padding-left: 88px; }
.row.active {
  background: #edebe9;
  box-shadow: inset 4px 0 #0c74d8;
  font-weight: 600;
}
main {
  flex: none;
  margin-left: 40px;
  width: 600px;
  height: 1205px;
  overflow: visible;
}
.cmd {
  height: 73px;
  border-bottom: 2px solid #d2d0ce;
  display: flex;
  align-items: center;
  padding: 0 0 0 17px;
}
.cmd > * { margin-top: 3px; }
.cmd > span { margin-top: 2px; }
.c-add { margin-left: 18px; }
.c-chev { margin-left: 17px; }
.c-dl { margin-left: 38px; }
.c-dt { margin-left: 22px; }
.c-cols { margin-left: 32px; }
.mtabs {
  margin: 34px 0 0 6px;
  height: 68px;
  display: flex;
  line-height: 67px;
  font-size: 26.5px;
}
.mtabs b, .ptabs b { font-weight: 600; box-shadow: inset 0 -4px #0c74d8; }
.mtabs b { height: 68px; }
.mtabs span:nth-child(2) { margin-left: 48px; }
.mtabs span:nth-child(3) { margin-left: 55px; }
.blk {
  margin: 30px 0 0 6px;
  height: 158px;
  display: flex;
  flex-direction: column;
  align-items: flex-start;
}
.blk strong { line-height: 42px; font-weight: 700; }
.blk > span { line-height: 44px; }
.blk button { margin-top: 24px; }
.second { margin-top: 36px; }
button {
  border: 0;
  height: 48px;
  border-radius: 4px;
  padding: 0 42px;
  background: #0c74d8;
  color: #fff;
  font: 600 24.5px/46px "Noto Sans", "Open Sans", sans-serif;
  text-align: left;
}
button span { height: 48px; }
.b1 { width: 266px; }
.b2 { width: 236px; }
.b3 { width: 328px; margin-top: 88px; }
.card {
  margin: 62px 0 0 6px;
  width: 570px;
  height: 390px;
  box-sizing: border-box;
  border: 2px solid #d4d2d0;
  border-radius: 4px;
  box-shadow: 0 3px 8px rgba(0, 0, 0, 0.1);
  padding: 30px 24px 0;
}
.card.last { margin-top: 64px; }
h3 {
  margin: 0 0 53px;
  font-size: 30px;
  line-height: 36px;
  font-weight: 600;
}
.card p { margin: 0; height: 35.5px; line-height: 36px; }
.card .more { display: flex; gap: 7px; color: #0c74d8; }
.more svg { margin-top: 7px; }

/* side panel */
.panel {
  flex: 1;
  min-width: 0;
  background: #fff;
  position: relative;
  box-shadow: -2px 0 24px rgba(0, 0, 0, 0.3);
  clip-path: inset(0 0 0 -60px);
  padding: 0 40px 0 56px;
}
.ptitle {
  height: 96px;
  margin-left: -16px;
  display: flex;
  justify-content: space-between;
  align-items: center;
}
h2 { margin: -3px 0 0; font-size: 45px; font-weight: 600; line-height: 62px; }
.ptitle svg { margin-right: 19px; }
.ptabs {
  margin-top: 32px;
  height: 72px;
  font-size: 26.5px;
  display: flex;
  gap: 48px;
}
.ptabs b, .ptabs span { line-height: 84px; margin-top: -4px; height: 76px; }
.pdesc { margin-top: 25px; line-height: 36px; }
.psearch { margin-top: 18px; width: 1614px; }
.psearch svg { margin-right: 12px; }
.label { display: flex; align-items: center; gap: 16px; height: 36px; }
.label svg { margin-top: -1px; }
.l1 { margin-top: 42px; }
.l2 { margin-top: 41px; }
.l3 { margin-top: 41px; }
.grid { margin-top: -1px; width: 1614px; overflow: hidden; }
.gr {
  display: grid;
  grid-template-columns: 283px 905px 296px 400px;
  height: 62px;
  border-bottom: 2px solid #edebe9;
}
.gr > div {
  padding-left: 9px;
  display: flex;
  align-items: center;
  min-width: 0;
}
.gr > div:first-child { padding-left: 16px; }
.gr > div:nth-child(3) { padding-left: 10px; }
.gh { height: 70px; border-color: #e6e6e6; }
.gh > div:not(:first-child) { box-shadow: inset 2px 0 #cfcdcb; }
.gh b, .classic b { font-weight: 600; margin-top: -2px; }
.tight { letter-spacing: -0.2px; }
.lnk { color: #0c74d8; }
.clip { margin: 0; width: 261px; overflow: hidden; white-space: pre; letter-spacing: 0; }
.inh { margin-left: 8px; }
.gr > .wrap {
  flex-direction: column;
  align-items: flex-start;
  height: 61px;
  overflow: hidden;
  padding-top: 1px;
}
.wrap span { line-height: 35px; flex: none; letter-spacing: -0.2px; }
.track {
  height: 26px;
  margin-top: 2px;
  background: #fafafa;
  border-bottom: 2px solid #ececec;
  box-shadow: 0 -2px #e6e6e6;
  display: flex;
  align-items: center;
}
.thumb { margin: 2px 0 0 6px; width: 1237px; height: 16px; border-radius: 8px; background: #c1c1c1; }
.classic { width: 1598px; padding-left: 16px; display: flex; align-items: center; }
.ch { height: 70px; margin-top: -1px; border-bottom: 2px solid #e8e8e8; }
.cd { margin-left: 356px; }
.cr { height: 68px; border-bottom: 2px solid #cccccc; }
.cr span { margin-top: -15px; }

/* dock */
.dock {
  margin: 2px 0 0 190px;
  width: 2500px;
  height: 96px;
  flex: none;
  box-sizing: border-box;
  border: 2px solid rgba(190, 170, 215, 0.35);
  border-radius: 34px;
  padding: 13px 0 0 13px;
  display: flex;
  align-items: flex-start;
  gap: 18px;
  position: relative;
  background: linear-gradient(100deg, #62567c 0%, #60566f 22%, #64548a 40%, #66528f 55%, #8a50a8 66%, #9050b8 74%, #7a52a8 83%, #665488 92%, #625684 100%);
  box-shadow: 0 0 70px rgba(0, 0, 0, 0.27);
}
.app { width: 60px; height: 60px; flex: none; position: relative; }
.app > svg { width: 60px; height: 60px; overflow: visible; filter: drop-shadow(0 1px 1px rgba(0, 0, 0, 0.35)); }
.app.on::after {
  content: "";
  position: absolute;
  left: 25px;
  top: 69px;
  width: 8px;
  height: 8px;
  border-radius: 50%;
  background: #0a0018;
}
.app em {
  position: absolute;
  right: -8px;
  top: -7px;
  width: 29px;
  height: 28px;
  border-radius: 14px;
  background: #f5333f;
  color: #fff;
  font: 400 14px/28px Inter, sans-serif;
  letter-spacing: -0.5px;
  text-align: center;
}
.sep { width: 2px; height: 72px; flex: none; background: #4a2870; margin-top: -3px; }
.s1 { margin-left: 9px; margin-right: 8px; }
.s2 { margin-left: 6px; margin-right: 2px; }
.thumbs { display: flex; gap: 8px; margin-top: 9px; }
.trash { margin: -6px 0 0 -2px; }
</style>
